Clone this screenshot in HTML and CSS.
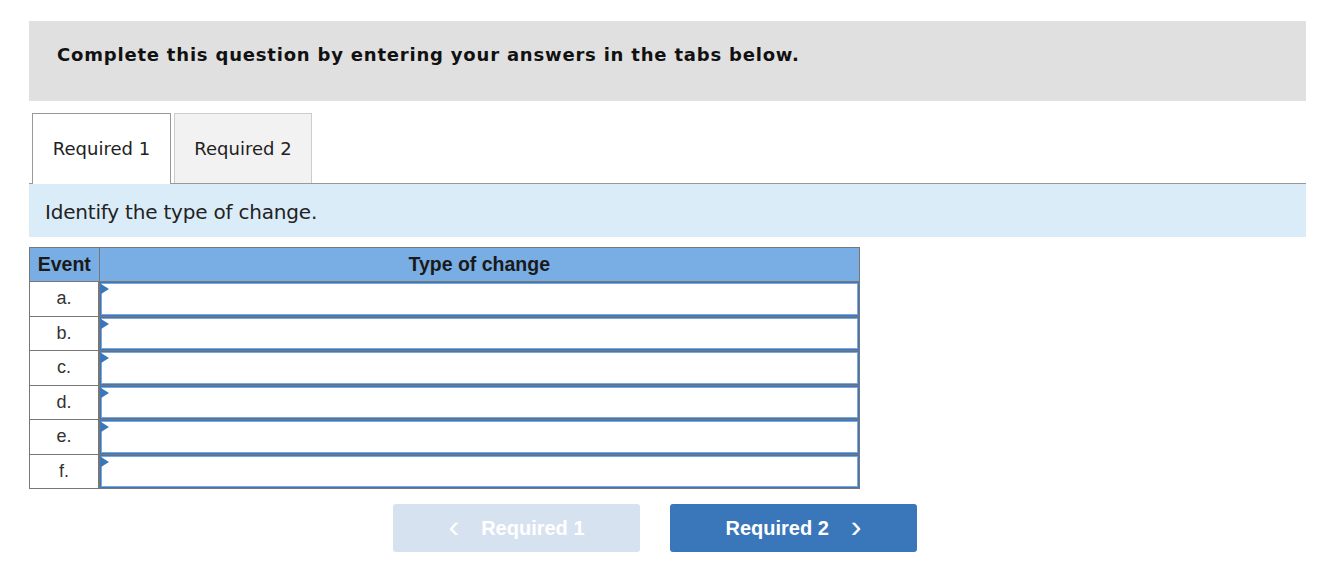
FILE: index.html
```html
<!DOCTYPE html>
<html>
<head>
<meta charset="utf-8">
<link rel="stylesheet" href="styles.css">
</head>
<body>
<div class="page">
  <div class="banner">Complete this question by entering your answers in the tabs below.</div>
  <div class="tabs">
    <div class="tab active">Required 1</div>
    <div class="tab">Required 2</div>
  </div>
  <div class="instr">Identify the type of change.</div>
  <table class="grid">
    <thead>
      <tr><th class="ev">Event</th><th>Type of change</th></tr>
    </thead>
    <tbody>
      <tr><td class="ev">a.</td><td class="in"><div class="sel"><span class="tri"></span></div></td></tr>
      <tr><td class="ev">b.</td><td class="in"><div class="sel"><span class="tri"></span></div></td></tr>
      <tr><td class="ev">c.</td><td class="in"><div class="sel"><span class="tri"></span></div></td></tr>
      <tr><td class="ev">d.</td><td class="in"><div class="sel"><span class="tri"></span></div></td></tr>
      <tr><td class="ev">e.</td><td class="in"><div class="sel"><span class="tri"></span></div></td></tr>
      <tr><td class="ev">f.</td><td class="in"><div class="sel"><span class="tri"></span></div></td></tr>
    </tbody>
  </table>
  <div class="nav">
    <div class="btn prev"><span class="chev">&lsaquo;</span>Required 1</div>
    <div class="btn next">Required 2<span class="chev">&rsaquo;</span></div>
  </div>
</div>
</body>
</html>
```
FILE: styles.css
```css
html, body { margin: 0; padding: 0; background: #fff; }
.page {
  width: 1277px;
  margin-left: 29px;
  padding-top: 21px;
  font-family: "DejaVu Sans", Verdana, sans-serif;
  color: #111;
}
.banner {
  background: #e0e0e0;
  height: 80px;
  box-sizing: border-box;
  padding: 21px 0 0 28px;
  font-weight: bold;
  font-size: 18px;
  letter-spacing: 0.8px;
  line-height: 26px;
}
.tabs {
  display: flex;
  margin-top: 12px;
  padding-left: 3px;
  gap: 3px;
  border-bottom: 1px solid #999;
  height: 70px;
}
.tab {
  box-sizing: border-box;
  width: 138px;
  height: 70px;
  border: 1px solid #ccc;
  border-bottom: none;
  background: #f2f2f2;
  font-size: 18px;
  display: flex;
  align-items: center;
  justify-content: center;
  padding-bottom: 1px;
  color: #222;
}
.tab.active {
  width: 139px;
  background: #fff;
  border-color: #999;
  height: 71px;
  margin-bottom: -1px;
}
.instr {
  background: #dbecf9;
  height: 53px;
  box-sizing: border-box;
  padding: 15px 0 0 16px;
  font-size: 20px;
  letter-spacing: -0.2px;
  line-height: 26px;
  color: #222;
}
.grid {
  margin-top: 10px;
  border-collapse: collapse;
  width: 831px;
  font-family: "Liberation Sans", Arial, sans-serif;
}
.grid th {
  background: #79aee4;
  border: 1px solid #777;
  height: 33px;
  padding: 0;
  font-size: 19.5px;
  font-weight: bold;
  color: #1a1a1a;
}
.grid th.ev, .grid td.ev { width: 68px; }
.grid td {
  border: 1px solid #777;
  height: 33.5px;
  padding: 0;
}
.grid td.ev {
  text-align: center;
  font-size: 18px;
  color: #333;
  border-right-width: 2px;
}
.grid td.in { padding: 0; }
.sel {
  position: relative;
  height: 33.5px;
  box-sizing: border-box;
  border: 1px solid #3f77ba;
  box-shadow: inset 0 0 0 1px #7aa8dc;
  background: #fff;
}
.tri {
  position: absolute;
  left: 0;
  top: 1px;
  width: 0;
  height: 0;
  border-top: 5px solid transparent;
  border-bottom: 5px solid transparent;
  border-left: 8px solid #3a76ba;
}
.nav {
  display: flex;
  margin-top: 15px;
  padding-left: 364px;
  gap: 30px;
}
.btn {
  width: 247px;
  height: 48px;
  border-radius: 3px;
  display: flex;
  align-items: center;
  justify-content: center;
  font-family: "Liberation Sans", Arial, sans-serif;
  font-weight: bold;
  font-size: 20px;
  color: #fff;
}
.btn.prev { background: #d7e2f0; }
.btn.next { background: #3a76ba; }
.chev { font-size: 32px; font-weight: normal; line-height: 1; margin-top: -5px; }
.prev .chev { margin-right: 22px; }
.next .chev { margin-left: 22px; }
```
